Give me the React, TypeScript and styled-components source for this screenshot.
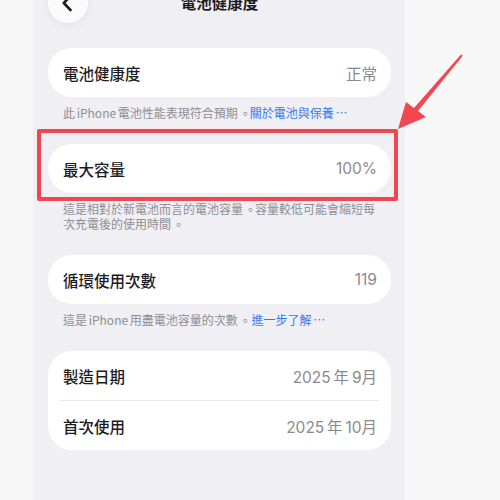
import styled, { createGlobalStyle } from 'styled-components';

const GlobalStyle = createGlobalStyle`
  html, body {
    margin: 0;
    padding: 0;
    background: #f7f7f8;
  }

  * {
    box-sizing: border-box;
  }
`;

type Row = { label: string; value: string };

const DATES: Row[] = [
  { label: '製造日期', value: '2025\u2009年\u20099月' },
  { label: '首次使用', value: '2025\u2009年\u200910月' },
];

const Stop = () => <StopMark>。</StopMark>;

export default function App() {
  return (
    <>
      <GlobalStyle />
      <Page lang="zh-Hant-TW">
        <Phone>
          <Header>
            <BackButton aria-label="返回">
              <svg width="12" height="18" viewBox="0 0 12 18">
                <path
                  d="M9.5 2 L2.8 9 L9.5 16"
                  fill="none"
                  stroke="#1c1c1e"
                  strokeWidth="2.6"
                  strokeLinecap="round"
                  strokeLinejoin="round"
                />
              </svg>
            </BackButton>
            <Title>電池健康度</Title>
          </Header>

          <Section>
            <Card>
              <RowLine>
                <Label>電池健康度</Label>
                <Value>正常</Value>
              </RowLine>
            </Card>
            <Footnote>
              此 iPhone 電池性能表現符合預期<Stop />
              <Link>關於電池與保養 ⋯</Link>
            </Footnote>
          </Section>

          <Section>
            <Highlighted>
              <Card>
                <RowLine>
                  <Label>最大容量</Label>
                  <Value>100%</Value>
                </RowLine>
              </Card>
              <HighlightBox />
            </Highlighted>
            <Footnote>
              這是相對於新電池而言的電池容量<Stop />
              容量較低可能會縮短每次充電後的使用時間<Stop />
            </Footnote>
          </Section>

          <Section>
            <Card>
              <RowLine>
                <Label>循環使用次數</Label>
                <Value>119</Value>
              </RowLine>
            </Card>
            <Footnote>
              這是 iPhone 用盡電池容量的次數<Stop /> <Link>進一步了解 ⋯</Link>
            </Footnote>
          </Section>

          <Section>
            <Card>
              {DATES.map((row, i) => (
                <div key={row.label}>
                  {i > 0 && <Divider />}
                  <RowLine>
                    <Label>{row.label}</Label>
                    <Value>{row.value}</Value>
                  </RowLine>
                </div>
              ))}
            </Card>
          </Section>
        </Phone>

        <Arrow viewBox="390 50 80 90" width="80" height="90">
          <polygon
            points="398,129 406,102 414,108 461.2,54.3 462.8,55.7 418,111 426,117"
            fill="#f2474f"
          />
        </Arrow>
      </Page>
    </>
  );
}

const Page = styled.div`
  position: relative;
  display: flex;
  height: 500px;
  overflow: hidden;
  padding-left: 33px;
  font-family: 'Inter', 'Noto Sans CJK TC', sans-serif;
`;

const Phone = styled.div`
  width: 372px;
  min-height: 520px;
  background: #efeff4;
  padding: 0 14px 0 15px;
  display: flex;
  flex-direction: column;
`;

const Header = styled.div`
  display: grid;
  grid-template-columns: 40px 1fr 40px;
  align-items: center;
  height: 40px;
  margin-top: -17px;
  margin-bottom: 25px;
`;

const BackButton = styled.button`
  width: 40px;
  height: 40px;
  border: none;
  border-radius: 50%;
  background: #fbfbfc;
  box-shadow: 0 2px 10px rgba(0, 0, 0, 0.06);
  display: flex;
  align-items: center;
  justify-content: center;
  padding: 0 2px 0 0;
`;

const Title = styled.div`
  text-align: center;
  font-size: 15.5px;
  font-weight: 600;
  color: #1c1c1e;
  margin-top: -2px;
`;

const Section = styled.section`
  margin-bottom: 24px;
`;

const Card = styled.div`
  background: #ffffff;
  border-radius: 24px;
  overflow: hidden;
`;

const RowLine = styled.div`
  height: 49px;
  display: flex;
  align-items: center;
  justify-content: space-between;
  padding: 0 14px 0 15px;
`;

const Label = styled.span`
  font-size: 15.5px;
  font-weight: 500;
  color: #1c1c1e;
`;

const Value = styled.span`
  font-size: 15.5px;
  color: #8a8a8e;
`;

const Divider = styled.div`
  height: 1px;
  margin: 0 12px;
  background: #e6e6eb;
`;

const Footnote = styled.p`
  margin: 0;
  padding: 8px 12px 0 15px;
  font-family: 'Noto Sans CJK TC', 'Inter', sans-serif;
  font-size: 12px;
  line-height: 15px;
  color: #8e8e93;
  word-spacing: -1px;
`;

const StopMark = styled.span`
  display: inline-block;
  width: 1em;
  transform: translate(0.12em, 0.12em);
`;

const Link = styled.span`
  color: #3478f6;
`;

const Highlighted = styled.div`
  position: relative;
`;

const HighlightBox = styled.div`
  position: absolute;
  top: -15px;
  left: -11px;
  right: -7px;
  bottom: -8px;
  border: 4px solid #f0464f;
  border-radius: 2px;
  pointer-events: none;
`;

const Arrow = styled.svg`
  position: absolute;
  left: 390px;
  top: 50px;
`;
